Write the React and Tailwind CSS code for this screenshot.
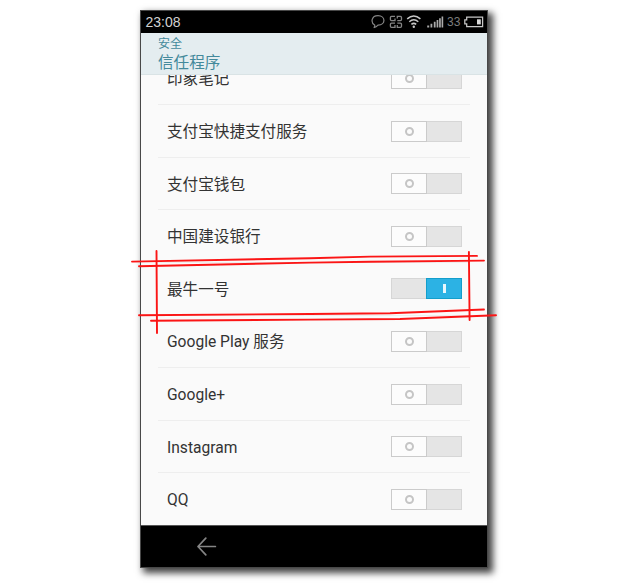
const apps = [
  { name: '印象笔记' },
  { name: '支付宝快捷支付服务' },
  { name: '支付宝钱包' },
  { name: '中国建设银行' },
  { name: '最牛一号', on: true },
  { name: 'Google Play 服务' },
  { name: 'Google+' },
  { name: 'Instagram' },
  { name: 'QQ' },
];

function Toggle({ on }) {
  return (
    <div className="flex h-[21px] w-[71px] shrink-0">
      {on ? (
        <>
          <div className="h-full w-[35px] border border-r-0 border-[#d6d6d6] bg-[#e5e5e5]" />
          <div className="flex h-full w-9 items-center justify-center border border-[#139ecb] bg-[#2cb2e4]">
            <div className="h-[9px] w-[3px] bg-[#e8f7fd]" />
          </div>
        </>
      ) : (
        <>
          <div className="flex h-full w-9 items-center justify-center border border-[#cbcbcb] bg-[#fcfcfc]">
            <div className="size-[9px] rounded-full border-2 border-[#c5c5c5]" />
          </div>
          <div className="h-full w-[35px] border border-l-0 border-[#d6d6d6] bg-[#e5e5e5]" />
        </>
      )}
    </div>
  );
}

function StatusIcons() {
  return (
    <div className="flex items-center">
      <svg width="50" height="18" viewBox="371 12 50 18" fill="none">
        <path d="M374.6 23.9C370.6 21.6 371.2 14.8 378 14.7C385.8 14.7 386 23.9 378 24.1C377 25.3 375.5 26.3 373.8 26.7C374.7 25.9 375 25 374.6 23.9Z" stroke="#858585" strokeWidth="1.2" />
        <g stroke="#858585" strokeWidth="1.3">
          <path d="M395 15.4H391.5Q390.4 15.4 390.4 16.5V18.5Q390.4 19.6 391.5 19.6H395V17.4" />
          <path d="M397.3 17.6V15.4H400.4Q401.5 15.4 401.5 16.5V18.5Q401.5 19.6 400.4 19.6H397.3" />
          <path d="M395 22.2H391.5Q390.4 22.2 390.4 23.3V25.2Q390.4 26.3 391.5 26.3H395V24" />
          <path d="M397.3 22.2H400.4Q401.5 22.2 401.5 23.3V25.2Q401.5 26.3 400.4 26.3H397.3V24" />
        </g>
        <g stroke="#c8c8c8" strokeWidth="1.5">
          <path d="M407.2 17.8Q413.8 12.3 420.4 17.8" />
          <path d="M409.3 20.7Q413.8 16.8 418.3 20.7" />
          <path d="M411.4 23.4Q413.8 21.4 416.2 23.4" />
        </g>
        <circle cx="413.8" cy="25.8" r="1.2" fill="#c8c8c8" />
      </svg>
      <svg className="ml-[6px]" width="17" height="18" viewBox="427 12.5 17 18" fill="#aaaaaa">
        <path d="M427.2 25h2v2h-2z" />
        <path d="M430.5 23.3h1.8V27h-1.8zM433.8 21.3h1.8V27h-1.8zM436.6 19.5h1.7V27h-1.7zM439.1 17.8h1.7V27h-1.7zM441.6 16h1.6v11h-1.6z" />
      </svg>
      <span className="ml-[3px] w-[14px] font-['Liberation_Sans',sans-serif] text-[12px] leading-[18px] text-[#7d7d7d]">33</span>
      <svg className="ml-[3px]" width="20" height="18" viewBox="464 12.5 20 18" fill="none">
        <path d="M466.7 16.5H482.6V26.1H466.7V23.3H464.8V19.4H466.7Z" stroke="#c8c8c8" strokeWidth="1.25" />
        <path d="M477 18.8h3.8v5.1h-3.8z" fill="#d8d8d8" />
      </svg>
    </div>
  );
}

// Hand-drawn red strokes that call attention to the enabled program.
function Marks() {
  return (
    <svg className="pointer-events-none absolute top-[245px] left-[125px]" width="380" height="90" viewBox="125 245 380 90" fill="none" stroke="#fb1515" strokeWidth="1.9" strokeLinecap="round">
      <path d="M132 261.6L310 258.2L370 256.6L477 255.9" />
      <path d="M139 266.2L310 262.6L370 261.7L484 260.6" />
      <path d="M139 315.2L310 314L390 313.3L484 309.5" />
      <path d="M151 320.7L310 319.6L400 319L496 315.3" />
      <path d="M156.5 251L157 333" />
      <path d="M468.9 252L469.6 320" />
    </svg>
  );
}

export default function App() {
  return (
    <div className="relative h-[588px] w-[640px] overflow-hidden bg-white pt-[10px] pl-[140px] font-[Roboto,'Noto_Sans_CJK_SC',sans-serif]">
      <main className="flex h-[558px] w-[348px] flex-col border border-[#484848] bg-[#fafafa] shadow-[4px_4px_7px_1px_rgba(0,0,0,0.75)]">
        <div className="flex h-[22px] shrink-0 items-center justify-between bg-black pr-[3px] pl-[4.5px]">
          <span className="font-['Liberation_Sans',sans-serif] text-[14px] leading-[20px] text-[#d2d2d2]">23:08</span>
          <StatusIcons />
        </div>
        <header className="flex h-[42px] shrink-0 flex-col border-b border-[#d9e3e5] bg-[#e4edf0] pt-[3px] pl-[17px] text-[#43899b]">
          <div className="text-[12px] leading-[16px]">安全</div>
          <h1 className="pt-px text-[15.6px] leading-[20px]">信任程序</h1>
        </header>
        <section className="flex h-[450px] shrink-0 flex-col justify-end overflow-hidden">
          {apps.map((app) => (
            <div key={app.name} className="mr-[17px] ml-[17px] flex h-[52.6px] shrink-0 items-center justify-between border-b border-[#eeeeee] pr-[8px] pl-[9px] last:mb-[-1px] last:border-b-transparent">
              <span className="pt-[2px] text-[15.6px] leading-[20px] text-[#333333]">{app.name}</span>
              <Toggle on={app.on} />
            </div>
          ))}
        </section>
        <nav className="flex min-h-0 flex-1 items-center border-t border-[#555555] bg-black pl-[56px]">
          <svg width="20" height="20" viewBox="0 0 20 20" fill="none" stroke="#858585" strokeWidth="1.7" strokeLinecap="round" strokeLinejoin="round">
            <path d="M8.8 1.2L1 9.5L8.8 17.8M1 9.5H18.4" />
          </svg>
        </nav>
      </main>
      <Marks />
    </div>
  );
}
